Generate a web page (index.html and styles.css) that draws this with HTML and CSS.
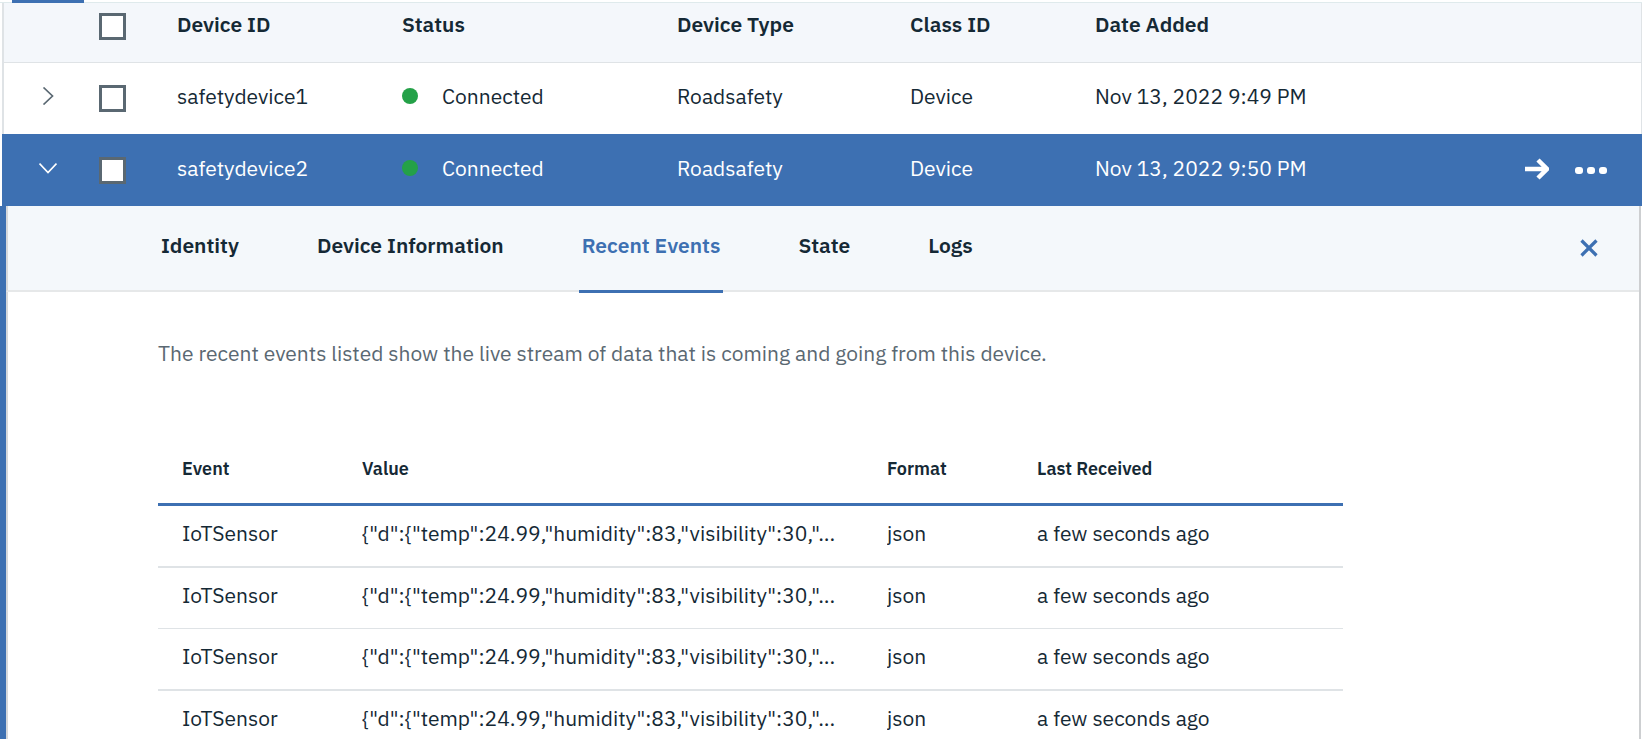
FILE: index.html
```
<!DOCTYPE html>
<html lang="en">
<head>
<meta charset="utf-8">
<title>Devices</title>
<meta name="viewport" content="width=device-width, initial-scale=1">
<link rel="stylesheet" href="styles.css">
</head>
<body>
<div class="view-tabs"><span class="view-tab-indicator"></span></div>
<main>
  <table class="devices">
    <colgroup>
      <col class="col-expand"><col class="col-check"><col class="col-id"><col class="col-status">
      <col class="col-type"><col class="col-class"><col class="col-date"><col>
    </colgroup>
    <thead>
      <tr>
        <td></td>
        <td><input class="check" type="checkbox" aria-label="Select all devices"></td>
        <th scope="col">Device ID</th>
        <th scope="col">Status</th>
        <th scope="col">Device Type</th>
        <th scope="col">Class ID</th>
        <th scope="col">Date Added</th>
        <td></td>
      </tr>
    </thead>
    <tbody>
      <tr class="device">
        <td><button class="icon-button" type="button" aria-label="Expand safetydevice1" aria-expanded="false"><svg class="chevron" viewBox="0 0 18 18" width="18" height="18"><path d="M4.500.5 13.500 9 4.500 17.500"/></svg></button></td>
        <td><input class="check" type="checkbox" aria-label="Select safetydevice1"></td>
        <td>safetydevice1</td>
        <td><span class="status"><span class="dot"></span>Connected</span></td>
        <td>Roadsafety</td>
        <td>Device</td>
        <td>Nov 13, 2022 9:49 PM</td>
        <td></td>
      </tr>
      <tr class="device selected">
        <td><button class="icon-button" type="button" aria-label="Collapse safetydevice2" aria-expanded="true"><svg class="chevron" viewBox="0 0 18 18" width="18" height="18"><path d="M.5 4.500 9 13.500 17.500 4.500"/></svg></button></td>
        <td><input class="check" type="checkbox" aria-label="Select safetydevice2"></td>
        <td>safetydevice2</td>
        <td><span class="status"><span class="dot"></span>Connected</span></td>
        <td>Roadsafety</td>
        <td>Device</td>
        <td>Nov 13, 2022 9:50 PM</td>
        <td>
          <div class="actions">
            <button class="icon-button" type="button" aria-label="Open device"><svg class="arrow" viewBox="0 0 24 22" width="24" height="22"><path d="M0 11h21M13 2l9 9-9 9"/></svg></button>
            <button class="icon-button" type="button" aria-label="More actions"><svg class="dots" viewBox="0 0 32 22" width="32" height="22"><rect x="0" y="9" width="8" height="7" rx="3"/><rect x="12" y="9" width="8" height="7" rx="3"/><rect x="24" y="9" width="8" height="7" rx="3"/></svg></button>
          </div>
        </td>
      </tr>
    </tbody>
  </table>

  <section class="detail">
    <nav class="detail-bar">
      <div class="tabs" role="tablist">
        <button class="tab" role="tab" type="button">Identity</button>
        <button class="tab" role="tab" type="button">Device Information</button>
        <button class="tab active" role="tab" type="button" aria-selected="true">Recent Events</button>
        <button class="tab" role="tab" type="button">State</button>
        <button class="tab" role="tab" type="button">Logs</button>
      </div>
      <button class="icon-button" type="button" aria-label="Close details"><svg class="close" viewBox="0 0 18 18" width="18" height="18"><path d="M1.500 1.500l15 15M16.500 1.500l-15 15"/></svg></button>
    </nav>
    <div class="detail-body">
      <p class="intro">The recent events listed show the live stream of data that is coming and going from this device.</p>
      <table class="events">
        <colgroup><col class="col-event"><col class="col-value"><col class="col-format"><col></colgroup>
        <thead>
          <tr><th scope="col">Event</th><th scope="col">Value</th><th scope="col">Format</th><th scope="col">Last Received</th></tr>
        </thead>
        <tbody>
          <tr><td>IoTSensor</td><td>{"d":{"temp":24.99,"humidity":83,"visibility":30,"...</td><td>json</td><td>a few seconds ago</td></tr>
          <tr><td>IoTSensor</td><td>{"d":{"temp":24.99,"humidity":83,"visibility":30,"...</td><td>json</td><td>a few seconds ago</td></tr>
          <tr><td>IoTSensor</td><td>{"d":{"temp":24.99,"humidity":83,"visibility":30,"...</td><td>json</td><td>a few seconds ago</td></tr>
          <tr><td>IoTSensor</td><td>{"d":{"temp":24.99,"humidity":83,"visibility":30,"...</td><td>json</td><td>a few seconds ago</td></tr>
        </tbody>
      </table>
    </div>
  </section>
</main>
</body>
</html>
```
FILE: styles.css
```
:root {
  --blue: #3d70b2;
  --ink: #152935;
  --muted: #5a6872;
  --line: #dfe3e6;
  --pale: #f4f7fb;
  --green: #24a148;
}

* { box-sizing: border-box; }

html { scrollbar-width: none; }

body {
  margin: 0;
  background: #fff;
  color: var(--ink);
  font: 400 21px/24px "IBM Plex Sans", Roboto, sans-serif;
}

table {
  border-collapse: separate;
  border-spacing: 0;
  table-layout: fixed;
}

th, td {
  padding: 0;
  text-align: left;
  white-space: nowrap;
}

th { font-weight: 600; }

.view-tabs {
  height: 3px;
  padding-left: 12px;
  border-bottom: 1px solid #dfeaec;
}

.view-tab-indicator {
  display: block;
  width: 72px;
  height: 3px;
  background: var(--blue);
}

/* Device list */
.devices {
  width: calc(100% - 2px);
  margin-left: 2px;
}

.col-expand { width: 97px; }
.col-check { width: 78px; }
.col-id { width: 225px; }
.col-status { width: 275px; }
.col-type { width: 233px; }
.col-class { width: 185px; }
.col-date { width: 300px; }

.devices thead th,
.devices thead td {
  height: 60px;
  padding-top: 10px;
  vertical-align: top;
  background: var(--pale);
  border-bottom: 1px solid var(--line);
}

.devices thead th { padding-top: 9px; }

.device td { height: 71px; padding-bottom: 5px; }
.device td:nth-child(2) { padding-bottom: 0; }
.device td:last-child { padding-bottom: 2px; }

.devices tr:not(.selected) > :first-child { border-left: 2px solid var(--line); }
.devices tr:not(.selected) > :last-child { border-right: 1px solid var(--line); }

.selected td {
  height: 72px;
  background: var(--blue);
  color: #fff;
}

.check {
  appearance: none;
  display: block;
  width: 27px;
  height: 27px;
  margin: 0;
  background: #fff;
  border: 3px solid var(--muted);
}

.icon-button {
  display: block;
  padding: 0;
  border: 0;
  background: none;
  color: inherit;
}

.icon-button svg {
  display: block;
  fill: none;
  stroke: currentColor;
}

.device td:first-child { padding-left: 35px; }
.device.selected td:first-child { padding-left: 37px; }
.device .chevron { stroke-width: 1.7; }
.device:not(.selected) .chevron { color: var(--muted); }

.status {
  display: flex;
  align-items: center;
  gap: 24px;
}

.dot {
  width: 16px;
  height: 16px;
  border-radius: 50%;
  background: var(--green);
}

.actions {
  display: flex;
  align-items: center;
  justify-content: flex-end;
  gap: 26px;
  padding-right: 35px;
}

.arrow { stroke-width: 4.5; }
.icon-button .dots { fill: currentColor; stroke: none; }

/* Expanded device */
.detail {
  margin-right: 1px;
  border-left: 6px solid var(--blue);
  border-right: 2px solid #cdcfd1;
}

.detail-bar {
  display: flex;
  align-items: center;
  justify-content: space-between;
  height: 86px;
  padding: 0 41px 0 150px;
  background: #f4f8fb;
  border-left: 2px solid #d6d8db;
  border-bottom: 2px solid #e6e8e9;
}

.tabs {
  display: flex;
  gap: 72px;
  height: 84px;
}

.tab {
  height: 87px;
  padding: 0 3px 7px;
  border: 0;
  border-bottom: 3px solid transparent;
  background: none;
  color: inherit;
  font: inherit;
  font-weight: 600;
}

.tab.active {
  color: var(--blue);
  border-bottom-color: var(--blue);
}

.close { color: var(--blue); stroke-width: 3.2; }

.detail-body {
  padding: 49px 150px 0;
  border-left: 2px solid #d6d8db;
}

.intro { margin: 0; color: var(--muted); }

.events {
  width: 100%;
  max-width: 1185px;
  margin-top: 68px;
}

.col-event { width: 204px; }
.col-value { width: 525px; }
.col-format { width: 150px; }

.events th {
  height: 73px;
  padding-top: 2px;
  font-size: 18px;
  border-bottom: 3px solid var(--blue);
}

.events td {
  height: 61px;
  padding-bottom: 6px;
  border-bottom: 1px solid var(--line);
}

.events tbody tr:nth-child(odd) td { height: 62px; border-bottom-width: 2px; }

.events th:first-child,
.events td:first-child { padding-left: 24px; }
.events th:nth-child(n+2), .events td:nth-child(n+2) { overflow: hidden; text-overflow: ellipsis; }
```
